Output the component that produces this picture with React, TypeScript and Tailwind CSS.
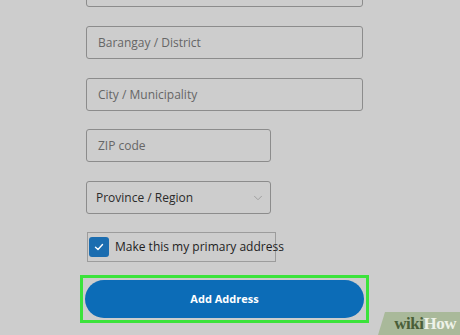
import { FiChevronDown } from "react-icons/fi";

const Field = ({ label, wide = true, className = "" }: { label: string; wide?: boolean; className?: string }) => (
    <div
        className={`h-[33px] ${wide ? "w-[277px]" : "w-[185px]"} border border-[#8c8c8c] rounded-[3px] flex items-center px-[11px] text-[12px] text-[#666] ${className}`}
    >
        {label}
    </div>
);

export default function App() {
    return (
        <div
            className="relative w-[460px] h-[335px] overflow-hidden bg-[#cdcdcd]"
            style={{ fontFamily: '"Open Sans", "Liberation Sans", sans-serif' }}
        >
            <div className="flex flex-col pl-[86px]">
                <Field label="" className="-mt-[26px]" />
                <Field label="Barangay / District" className="mt-[19px]" />
                <Field label="City / Municipality" className="mt-[19px]" />
                <Field label="ZIP code" wide={false} className="mt-[18px]" />
                <div className="mt-[19px] h-[33px] w-[185px] border border-[#8c8c8c] rounded-[3px] flex items-center justify-between pl-[9px] pr-[5px] text-[12px] text-[#2b2b2b]">
                    <span>Province / Region</span>
                    <FiChevronDown className="text-[#999] w-[14px] h-[14px] stroke-[1.5]" />
                </div>
                <div className="mt-[18px] ml-[1px] w-[189px] h-[30px] border border-[#9c9c9c] flex items-center">
                    <div className="shrink-0 ml-[1px] w-[20px] h-[20px] rounded-[3px] bg-[#1b6db0] flex items-center justify-center">
                        <svg width="10" height="8" viewBox="0 0 10 8" fill="none">
                            <path d="M1.5 4.2 L4 6.5 L8.5 1.5" stroke="white" strokeWidth="1.4" strokeLinecap="round" strokeLinejoin="round" />
                        </svg>
                    </div>
                    <span className="ml-[6px] text-[12px] text-[#1e1e1e] whitespace-nowrap">Make this my primary address</span>
                </div>
                <div className="mt-[13px] -ml-[6px] w-[289px] h-[48px] border-[3px] border-[#3be33b] p-[2px]">
                    <button className="w-full h-full rounded-full bg-[#0c6cb7] text-white font-bold text-[11px]">
                        Add Address
                    </button>
                </div>
            </div>
            <div className="absolute right-0 bottom-0 w-[82px] h-[23px] bg-[#a9b99a] [clip-path:polygon(7px_0,100%_0,100%_100%,0_100%)] flex items-center justify-end pr-[4px]">
                <span className="text-[17px] font-bold leading-none tracking-[-0.5px]" style={{ fontFamily: '"Liberation Serif", serif' }}>
                    <span className="text-[#4a5e38]">wiki</span>
                    <span className="text-[#eef2e8]">How</span>
                </span>
            </div>
        </div>
    );
}
